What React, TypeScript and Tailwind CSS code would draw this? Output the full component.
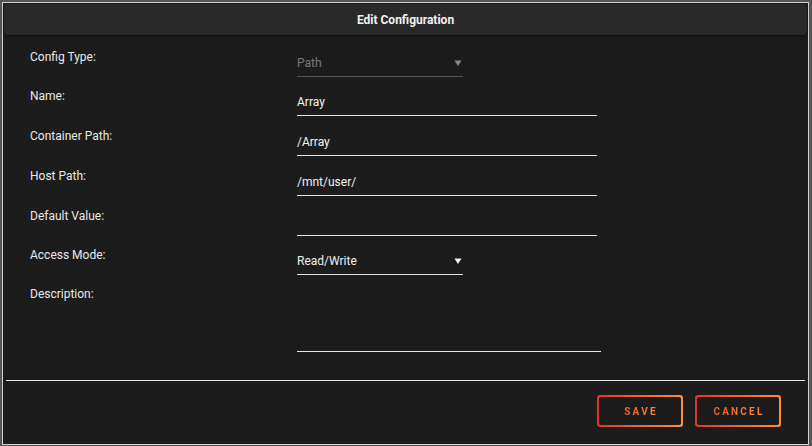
import React from 'react';

const font = { fontFamily: 'Roboto, "Liberation Sans", sans-serif' };

const Arrow = ({ className }: { className: string }) => (
  <svg width="8" height="8" viewBox="0 0 8 8" className={className}>
    <path d="M0.5 1.5 H7.5 L4 7 Z" fill="currentColor" />
  </svg>
);

type Row = { label: string; h: string; kind: 'input' | 'select' | 'area'; value?: string; muted?: boolean };

const rows: Row[] = [
  { label: 'Config Type:', h: 'h-[39px]', kind: 'select', value: 'Path', muted: true },
  { label: 'Name:', h: 'h-10', kind: 'input', value: 'Array' },
  { label: 'Container Path:', h: 'h-10', kind: 'input', value: '/Array' },
  { label: 'Host Path:', h: 'h-10', kind: 'input', value: '/mnt/user/' },
  { label: 'Default Value:', h: 'h-[39px]', kind: 'input', value: '' },
  { label: 'Access Mode:', h: 'h-[39px]', kind: 'select', value: 'Read/Write' },
  { label: 'Description:', h: 'h-[66px]', kind: 'area', value: '' },
];

const Field = ({ row }: { row: Row }) => {
  if (row.kind === 'select') {
    return (
      <div className={`w-[166px] flex items-center justify-between pt-[6px] pb-[5px] pr-[1px] border-b ${row.muted ? 'border-[#555555] text-[#7a7a7a]' : 'border-[#e6e6e6] text-[#f0f0f0]'}`}>
        <span className="text-[12px] leading-4">{row.value}</span>
        <Arrow className={row.muted ? 'text-[#8a8a8a]' : 'text-[#f0f0f0]'} />
      </div>
    );
  }
  if (row.kind === 'area') {
    return <div className="w-[304px] h-[66px] border-b border-[#e6e6e6]" />;
  }
  return (
    <div className="w-[300px] pt-[6px] pb-[5px] border-b border-[#e6e6e6] text-[#f2f2f2]">
      <span className="block text-[12px] leading-4 h-4">{row.value}</span>
    </div>
  );
};

const GradientButton = ({ label }: { label: string }) => (
  <button className="w-[86px] h-[32px] rounded-[3px] p-[2px] bg-gradient-to-r from-[#e12f2c] to-[#ff8f33]">
    <span className="w-full h-full rounded-[2px] bg-[#1c1c1c] flex items-center justify-center">
      <span className="text-[10px] font-bold tracking-[2.2px] pl-[2px] bg-gradient-to-r from-[#ea5a2b] to-[#fb8b36] bg-clip-text text-transparent">
        {label}
      </span>
    </span>
  </button>
);

export default function App() {
  return (
    <div className="w-[812px] h-[446px] bg-[#555555] pt-[2px] pl-[2px] overflow-hidden" style={font}>
      <div className="w-[807px] h-[443px] border border-[#d2d2d2] bg-[#1c1c1c] flex flex-col">
        <div className="mx-[1px] mt-[1px] h-[31px] rounded-[4px] bg-[#292929] shadow-[0_1px_2px_rgba(0,0,0,0.5)] flex items-center justify-center">
          <span className="text-[12px] font-bold text-[#f2f2f2]">Edit Configuration</span>
        </div>
        <div className="pt-[14px] flex flex-col">
          {rows.map((row) => (
            <div key={row.label} className={`flex items-start ${row.h}`}>
              <div className="w-[294px] pl-[27px] text-[12px] leading-4 text-[#e8e8e8]">{row.label}</div>
              <Field row={row} />
            </div>
          ))}
        </div>
        <div className="mt-[28px] mx-[3px] h-px bg-[#e8e8e8]" />
        <div className="flex justify-end gap-3 pr-[27px] pt-[14px]">
          <GradientButton label="SAVE" />
          <GradientButton label="CANCEL" />
        </div>
      </div>
    </div>
  );
}
